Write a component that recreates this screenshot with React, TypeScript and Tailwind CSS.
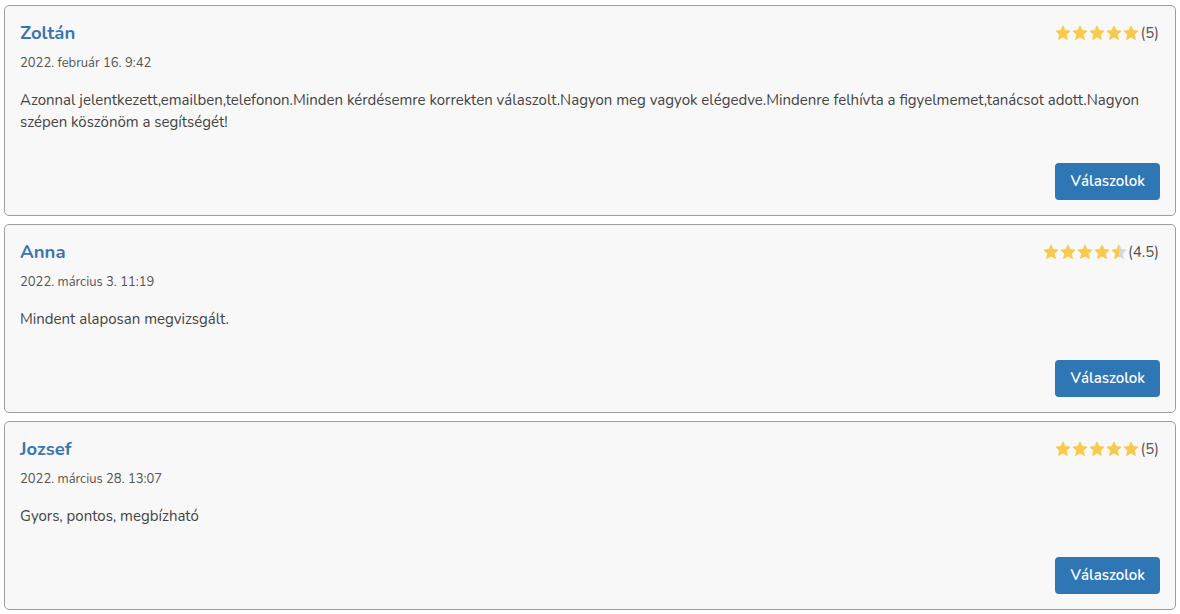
import React from "react";

const reviews = [
  {
    name: "Zoltán",
    date: "2022. február 16. 9:42",
    text: "Azonnal jelentkezett,emailben,telefonon.Minden kérdésemre korrekten válaszolt.Nagyon meg vagyok elégedve.Mindenre felhívta a figyelmemet,tanácsot adott.Nagyon szépen köszönöm a segítségét!",
    rating: 5,
    label: "(5)",
  },
  {
    name: "Anna",
    date: "2022. március 3. 11:19",
    text: "Mindent alaposan megvizsgált.",
    rating: 4.5,
    label: "(4.5)",
  },
  {
    name: "Jozsef",
    date: "2022. március 28. 13:07",
    text: "Gyors, pontos, megbízható",
    rating: 5,
    label: "(5)",
  },
];

const STAR = "M8 0.9l2.1 4.6 5 .6-3.7 3.4 1 5-4.4-2.5-4.4 2.5 1-5L0.9 6.1l5-.6z";

function Star({ fill }: { fill: number }) {
  const id = React.useId();
  return (
    <svg width="16" height="16" viewBox="0 0 16 16" className="block">
      <defs>
        <linearGradient id={id}>
          <stop offset={`${fill * 100}%`} stopColor="#f7ca4d" />
          <stop offset={`${fill * 100}%`} stopColor="#d6d6d6" />
        </linearGradient>
      </defs>
      <path d={STAR} fill={`url(#${id})`} stroke={`url(#${id})`} strokeWidth="0.9" strokeLinejoin="round" />
    </svg>
  );
}

function Stars({ rating, label }: { rating: number; label: string }) {
  return (
    <div className="flex items-center">
      <div className="flex gap-[1px]">
        {[0, 1, 2, 3, 4].map((i) => (
          <Star key={i} fill={Math.max(0, Math.min(1, rating - i))} />
        ))}
      </div>
      <span className="text-[15px] text-[#555] ml-[1px]">{label}</span>
    </div>
  );
}

export default function App() {
  return (
    <div
      className="bg-white min-h-[614px] px-[4px] pt-[5px] flex flex-col gap-[8px]"
      style={{ fontFamily: '"Nunito", "Open Sans", "Noto Sans", sans-serif' }}
    >
      {reviews.map((r) => (
        <div
          key={r.name}
          className="border border-[#9e9e9e] rounded-[5px] bg-[#f8f8f8] px-[15px] pt-[13px] pb-[15px] flex flex-col"
        >
          <div className="flex justify-between items-start">
            <div className="text-[18.5px] font-bold text-[#3a76ad] leading-[28px]">{r.name}</div>
            <div className="pt-[3px] mr-[1px]">
              <Stars rating={r.rating} label={r.label} />
            </div>
          </div>
          <div className="text-[13px] text-[#555] mt-[6px] leading-[20px]">{r.date}</div>
          <div className="text-[15px] text-[#444] mt-[16px] leading-[22px]">{r.text}</div>
          <div className="flex justify-end mt-[30px]">
            <button className="bg-[#2f76b5] text-white text-[15px] font-semibold rounded-[4px] h-[37px] pl-[16px] pr-[15px]">
              Válaszolok
            </button>
          </div>
        </div>
      ))}
    </div>
  );
}
